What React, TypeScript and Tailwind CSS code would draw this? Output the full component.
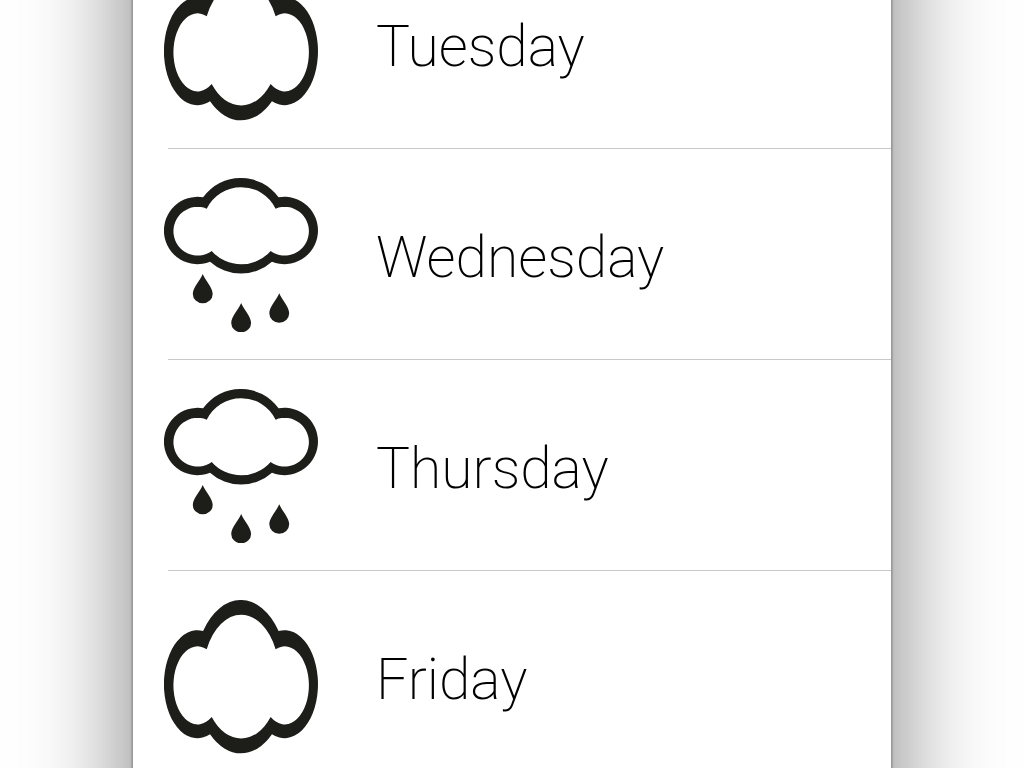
type Forecast = { day: string; rain: boolean };

const forecasts: Forecast[] = [
  { day: "Tuesday", rain: false },
  { day: "Wednesday", rain: true },
  { day: "Thursday", rain: true },
  { day: "Friday", rain: false },
];

const CLOUD =
  "M118 58A141 141 0 0 1 346 58A101 101 0 1 1 326 251A140 140 0 0 1 139 251A101 101 0 1 1 118 58Z" +
  "M129 92A73 73 0 1 0 144 219A119 119 0 0 0 322 219A73 73 0 1 0 337 92A116 116 0 0 0 129 92Z";

const DROP = "M0 0C8 20 30 40 30 60A30 28 0 0 1 -30 60C-30 40 -8 20 0 0Z";

function WeatherIcon({ rain }: { rain: boolean }) {
  return (
    <svg
      className="size-[154px] shrink-0 fill-[#1d1e1a]"
      viewBox={rain ? "0 0 465 462" : "0 0 465 288"}
      preserveAspectRatio="none"
      aria-hidden="true"
    >
      <path d={CLOUD} fillRule="evenodd" />
      {rain && (
        <>
          <path d={DROP} transform="translate(117 288)" />
          <path d={DROP} transform="translate(233 375)" />
          <path d={DROP} transform="translate(348 346)" />
        </>
      )}
    </svg>
  );
}

export default function App() {
  return (
    <main className="h-screen overflow-hidden bg-white px-6">
      <div className="mx-auto -mt-[262px] max-w-[760px] border border-[#999999] bg-white pt-[199px] pb-[300px] shadow-[0_0_2px_rgba(0,0,0,0.4),0_0_100px_rgba(0,0,0,0.5)]">
        <ul>
          {forecasts.map(({ day, rain }) => (
            <li key={day}>
              <div className="flex h-[210px] items-center gap-[58px] pt-[2px] pl-[31px]">
                <WeatherIcon rain={rain} />
                <span className="pt-1 font-['Roboto','Liberation_Sans',sans-serif] text-[57px] leading-none font-extralight text-black">
                  {day}
                </span>
              </div>
              <div className="ml-[35px] h-px bg-[#c8c7cc]" />
            </li>
          ))}
        </ul>
      </div>
    </main>
  );
}
